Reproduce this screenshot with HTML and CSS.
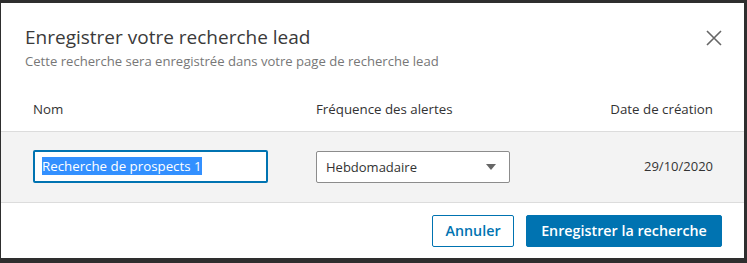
FILE: index.html
```html
<!DOCTYPE html>
<html lang="fr">
<head>
<meta charset="utf-8">
<link rel="stylesheet" href="styles.css">
</head>
<body>
<div class="modal">
  <div class="head">
    <div class="titles">
      <h2 class="title">Enregistrer votre recherche lead</h2>
      <p class="sub">Cette recherche sera enregistrée dans votre page de recherche lead</p>
    </div>
    <button class="close" aria-label="Fermer">
      <svg width="16" height="16" viewBox="0 0 16 16"><path d="M1 1 L15 15 M15 1 L1 15" stroke="#666" stroke-width="1.6" fill="none"/></svg>
    </button>
  </div>
  <div class="cols">
    <span class="c1">Nom</span>
    <span class="c2">Fréquence des alertes</span>
    <span class="c3">Date de création</span>
  </div>
  <div class="row">
    <div class="c1"><div class="input"><span class="sel">Recherche de prospects 1</span></div></div>
    <div class="c2"><div class="select"><span>Hebdomadaire</span><span class="caret"></span></div></div>
    <div class="c3 date">29/10/2020</div>
  </div>
  <div class="foot">
    <button class="btn sec">Annuler</button>
    <button class="btn pri">Enregistrer la recherche</button>
  </div>
</div>
</body>
</html>
```
FILE: styles.css
```css
html, body { margin: 0; padding: 0; }
body {
  background: #2e2e2e;
  width: 747px;
  height: 263px;
  overflow: hidden;
  font-family: "Open Sans", "Noto Sans", sans-serif;
}
.modal {
  width: 743px;
  height: 255px;
  margin: 3px 0 0 1px;
  background: #fff;
  display: flex;
  flex-direction: column;
}
.head {
  display: flex;
  justify-content: space-between;
  padding: 21px 22px 0 24px;
  height: 72px;
  box-sizing: border-box;
}
.title {
  margin: 0;
  font-size: 19px;
  font-weight: 400;
  line-height: 26px;
  color: #3a3a3a;
}
.sub {
  margin: 3px 0 0;
  font-size: 13.1px;
  line-height: 16px;
  color: #777;
}
.close {
  border: 0;
  background: none;
  padding: 0;
  margin-top: 6px;
  width: 16px;
  height: 16px;
}
.cols, .row {
  display: flex;
  align-items: center;
  padding: 0 31px 0 32px;
}
.cols {
  height: 56px;
  font-size: 13.3px;
  color: #333;
  padding-top: 12px;
  box-sizing: border-box;
}
.c1 { width: 283px; }
.c2 { width: 194px; }
.c3 { flex: 1; text-align: right; }
.row {
  height: 70px;
  background: #f3f3f3;
  border-top: 1px solid #dcdcdc;
  border-bottom: 1px solid #dcdcdc;
}
.input {
  width: 235px;
  height: 33px;
  margin-top: -2px;
  box-sizing: border-box;
  border: 2px solid #0073b1;
  border-radius: 2px;
  background: #fff;
  display: flex;
  align-items: center;
  padding-left: 7px;
  font-size: 13.3px;
}
.sel {
  background: #3390ff;
  color: #fff;
  line-height: 18px;
}
.select {
  width: 194px;
  height: 32px;
  margin-top: -1px;
  box-sizing: border-box;
  border: 1px solid #8c8c8c;
  border-radius: 2px;
  background: #fff;
  display: flex;
  align-items: center;
  justify-content: space-between;
  padding: 0 13px 0 9px;
  font-size: 13px;
  color: #333;
}
.caret {
  width: 0;
  height: 0;
  border-left: 5px solid transparent;
  border-right: 5px solid transparent;
  border-top: 6px solid #666;
}
.date {
  font-size: 13px;
  color: #333;
  margin-top: -2px;
}
.foot {
  flex: 1;
  display: flex;
  justify-content: flex-end;
  align-items: center;
  gap: 12px;
  padding-right: 22px;
}
.btn {
  height: 32px;
  box-sizing: border-box;
  border-radius: 2px;
  font-family: inherit;
  font-size: 14.3px;
  font-weight: 600;
  padding: 0 10px;
  cursor: pointer;
}
.sec {
  width: 82px;
  background: #fff;
  border: 1px solid #0073b1;
  color: #0073b1;
}
.pri {
  width: 196px;
  background: #0073b1;
  border: 1px solid #0073b1;
  color: #fff;
}
```
